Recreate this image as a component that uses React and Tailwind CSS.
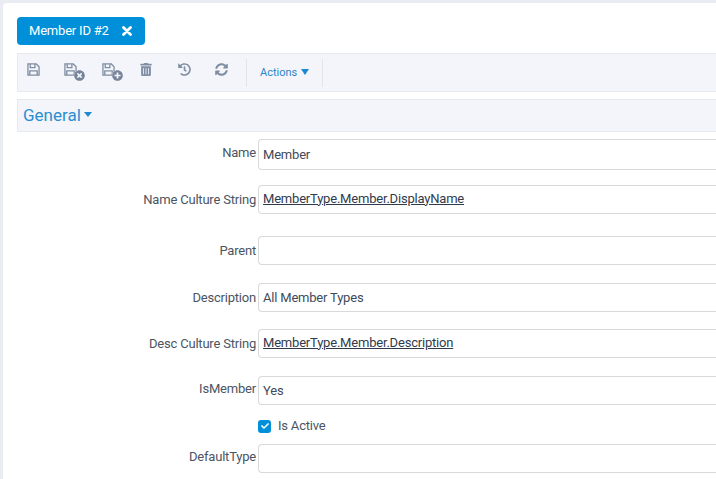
import React from 'react';
import { FaTrashAlt, FaHistory, FaSyncAlt, FaCheck, FaTimesCircle, FaPlusCircle } from 'react-icons/fa';

const fields = [
  { label: 'Name', value: 'Member', height: 'h-[31px]', gap: 'mb-[15px]', labelPad: 'pt-[4px]' },
  { label: 'Name Culture String', value: 'MemberType.Member.DisplayName', link: true, height: 'h-[29px]', gap: 'mb-[22px]', labelPad: 'pt-[5px]', valuePad: 'pb-[2px]' },
  { label: 'Parent', value: '', height: 'h-[29px]', gap: 'mb-[18px]', labelPad: 'pt-[5px]' },
  { label: 'Description', value: 'All Member Types', height: 'h-[29px]', gap: 'mb-[17px]', labelPad: 'pt-[5px]', valuePad: 'pt-[1px]' },
  { label: 'Desc Culture String', value: 'MemberType.Member.Description', link: true, height: 'h-[29px]', gap: 'mb-[18px]', labelPad: 'pt-[5px]', valuePad: 'pb-[2px]' },
  { label: 'IsMember', value: 'Yes', height: 'h-[29px]', gap: 'mb-[14px]', labelPad: 'pt-[3px]' },
];

function SaveIcon({ badge: Badge }) {
  return (
    <span className="relative block w-[22px] h-[18px]">
      <svg viewBox="0 0 14 14" className="absolute left-0 top-0 w-[13px] h-[13px] text-[#7f8ea3]" fill="none" stroke="currentColor" strokeWidth="1.4">
        <path d="M1 1h9l3 3v9H1z" />
        <path d="M3.5 1v4h5V1" />
        <path d="M3 13V8.5h8V13" />
      </svg>
      {Badge && (
        <span className="absolute left-[10px] top-[7px] w-[11px] h-[11px] rounded-full bg-[#f4f5fa]">
          <Badge className="w-[11px] h-[11px] text-[#76849a]" />
        </span>
      )}
    </span>
  );
}

function Field({ label, value, link, height, gap, labelPad, valuePad = '' }) {
  return (
    <div className={`flex ${gap}`}>
      <label className={`w-[241px] shrink-0 pr-[2px] text-right text-[#4b5563] ${labelPad}`}>{label}</label>
      <div className={`flex-1 ${height} ${valuePad} border border-[#d9d9d9] border-r-0 rounded-l-[4px] pl-[4px] flex items-center text-[#3f4a5a] bg-white`}>
        {link ? <span className="underline text-[#2f3b4c]">{value}</span> : value}
      </div>
    </div>
  );
}

export default function App() {
  return (
    <div className="h-[479px] w-[716px] overflow-hidden bg-[#e9ecf2] pl-[3px] pt-[3px] text-[13px] tracking-[-0.2px] font-['Roboto',sans-serif]">
      <div className="h-full bg-white rounded-tl-[4px] pl-[14px] pt-[14px]">
        <div className="w-[128px] h-[28px] rounded-[4px] bg-[#0090d9] text-white flex items-center pl-[12px]">
          <span>Member ID #2</span>
          <svg viewBox="0 0 10 10" className="ml-[13px] w-[10px] h-[10px]" stroke="currentColor" strokeWidth="2.8" strokeLinecap="round">
            <path d="M1.5 1.5l7 7M8.5 1.5l-7 7" />
          </svg>
        </div>

        <div className="mt-[8px] h-[39px] bg-[#f4f5fa] border border-[#e8e9ee] border-r-0 flex items-center">
          <div className="w-[228px] flex items-center pl-[9px] pt-[1px] pb-[3px]">
            <span className="w-[37px]"><SaveIcon /></span>
            <span className="w-[38px]"><SaveIcon badge={FaTimesCircle} /></span>
            <span className="w-[38px]"><SaveIcon badge={FaPlusCircle} /></span>
            <span className="w-[38px]"><FaTrashAlt className="w-[12px] h-[13px] text-[#7f8ea3] mb-[4px]" /></span>
            <span className="w-[37px]"><FaHistory className="w-[13px] h-[13px] text-[#7f8ea3] mb-[4px]" /></span>
            <span className="w-[25px]"><FaSyncAlt className="w-[13px] h-[13px] text-[#7f8ea3] mb-[4px]" /></span>
          </div>
          <div className="h-[28px] w-[77px] border-x border-[#e3e4e9] flex items-center pl-[13px] pt-[1px] text-[11px] tracking-normal text-[#2b86c9]">
            Actions
            <span className="ml-[4px] mb-[2px] w-0 h-0 border-x-[4px] border-x-transparent border-t-[6px] border-t-[#1d87cf]"></span>
          </div>
        </div>

        <div className="mt-[7px] h-[33px] bg-[#f4f5fa] border border-[#e8e9ee] border-r-0 flex items-center pl-[5px] pt-[1px] text-[17px] tracking-normal text-[#2b8ed0]">
          General
          <span className="ml-[3px] mb-[3px] w-0 h-0 border-x-[4px] border-x-transparent border-t-[5px] border-t-[#1d87cf]"></span>
        </div>

        <div className="mt-[7px]">
          {fields.map((f) => (
            <Field key={f.label} {...f} />
          ))}
          <div className="flex items-center mb-[11px] h-[14px] pl-[241px]">
            <span className="w-[13px] h-[13px] rounded-[3px] bg-[#0090d9] flex items-center justify-center">
              <FaCheck className="w-[8px] h-[8px] text-white" />
            </span>
            <span className="ml-[7px] text-[#4b5563]">Is Active</span>
          </div>
          <Field label="DefaultType" value="" height="h-[29px]" gap="mb-0" labelPad="pt-[3px]" />
        </div>
      </div>
    </div>
  );
}
